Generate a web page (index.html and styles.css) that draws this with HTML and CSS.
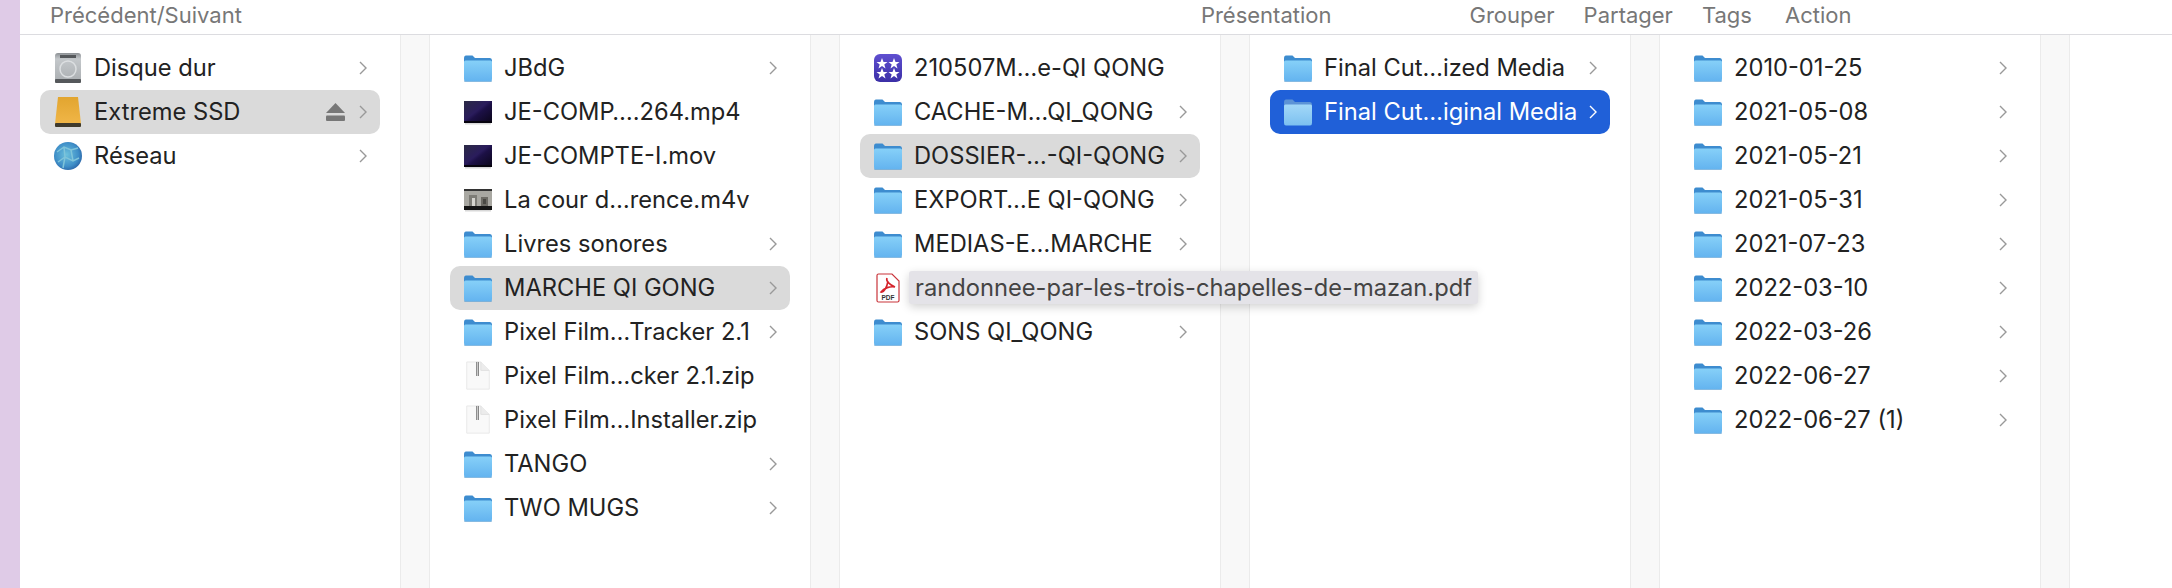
FILE: index.html
```html
<!DOCTYPE html>
<html lang="fr">
<head>
    <meta charset="UTF-8">
    <title>Finder</title>
    <link rel="stylesheet" href="styles.css">
</head>
<body>
<svg class="defs" width="0" height="0">
    <defs>
        <linearGradient id="fold-body" x1="0" y1="0" x2="0" y2="1">
            <stop offset="0" stop-color="#86d0f8"/>
            <stop offset="1" stop-color="#63b3ef"/>
        </linearGradient>
        <linearGradient id="fold-sel" x1="0" y1="0" x2="0" y2="1">
            <stop offset="0" stop-color="#a3d8f8"/>
            <stop offset="1" stop-color="#7cc0f0"/>
        </linearGradient>
        <linearGradient id="movie" x1="0" y1="0" x2="1" y2="1">
            <stop offset="0" stop-color="#2b2a45"/>
            <stop offset=".45" stop-color="#2a1c5c"/>
            <stop offset=".55" stop-color="#1c1046"/>
            <stop offset="1" stop-color="#0a0518"/>
        </linearGradient>
        <linearGradient id="ssd" x1="0" y1="0" x2="0" y2="1">
            <stop offset="0" stop-color="#e2a52f"/>
            <stop offset="1" stop-color="#f0b648"/>
        </linearGradient>
        <linearGradient id="disk" x1="0" y1="0" x2="0" y2="1">
            <stop offset="0" stop-color="#8c9094"/>
            <stop offset=".2" stop-color="#c4c8cb"/>
            <stop offset="1" stop-color="#a9adb0"/>
        </linearGradient>
        <radialGradient id="globe" cx=".45" cy=".45" r=".6">
            <stop offset="0" stop-color="#6cc0dc"/>
            <stop offset=".7" stop-color="#3f8fc8"/>
            <stop offset="1" stop-color="#2a63a6"/>
        </radialGradient>
        <linearGradient id="app" x1="0" y1="0" x2="0" y2="1">
            <stop offset="0" stop-color="#5f4fd0"/>
            <stop offset="1" stop-color="#3b2fa6"/>
        </linearGradient>
        <symbol id="i-folder" viewBox="0 0 28 28">
            <path d="M0 4.500Q0 1.500 2 1.500H8.500L11 4H26Q28 4 28 6.500V12H0Z" fill="#3d8ccf"/>
            <path d="M0 8Q0 6.500 1.500 6.500H26.500Q28 6.500 28 8V25Q28 27.500 26 27.500H2Q0 27.500 0 25Z" fill="url(#fold-body)"/>
            <path d="M0 25.500Q0 27.500 2 27.500H26Q28 27.500 28 25.500V26.500Q28 28 26 28H2Q0 28 0 26.500Z" fill="#5a9ccd"/>
        </symbol>
        <symbol id="i-folder-sel" viewBox="0 0 28 28">
            <path d="M0 4.500Q0 1.500 2 1.500H8.500L11 4H26Q28 4 28 6.500V12H0Z" fill="#5c93d6"/>
            <path d="M0 8Q0 6.500 1.500 6.500H26.500Q28 6.500 28 8V25Q28 27.500 26 27.500H2Q0 27.500 0 25Z" fill="url(#fold-sel)"/>
        </symbol>
        <symbol id="i-chev" viewBox="0 0 8 14">
            <path d="M1 1L7 7L1 13" fill="none" stroke="#999" stroke-width="1.400"/>
        </symbol>
        <symbol id="i-chev-w" viewBox="0 0 8 14">
            <path d="M1 1L7 7L1 13" fill="none" stroke="#fff" stroke-width="1.400"/>
        </symbol>
        <symbol id="i-movie" viewBox="0 0 28 28">
            <rect x="0" y="3" width="28" height="22" fill="url(#movie)"/>
            <rect x="0" y="23" width="28" height="2" fill="#07040f"/>
            <rect x="1" y="25" width="26" height="1.500" fill="#d8d8d8"/>
        </symbol>
        <symbol id="i-photo" viewBox="0 0 28 28">
            <rect x="0" y="3" width="28" height="2" fill="#333"/>
            <rect x="0" y="5" width="28" height="15" fill="#a9a8a2"/>
            <rect x="5" y="9" width="8" height="11" fill="#7d7c76"/>
            <rect x="8" y="12" width="3" height="8" fill="#d5d4cf"/>
            <rect x="17" y="11" width="7" height="9" fill="#6e6c66"/>
            <rect x="19" y="13" width="3" height="5" fill="#4a4944"/>
            <rect x="0" y="20" width="28" height="4" fill="#151515"/>
            <rect x="1" y="24" width="26" height="1.500" fill="#d8d8d8"/>
        </symbol>
        <symbol id="i-zip" viewBox="0 0 28 32">
            <path d="M2 1H17L26 10V30H2Z" fill="#f9f9f9" stroke="#e8e8e8"/>
            <path d="M17 1V10H26" fill="#ececec" stroke="#e0e0e0"/>
            <rect x="12" y="1" width="3" height="15" fill="#808080"/>
            <rect x="13" y="1" width="1" height="15" fill="#d0d0d0"/>
        </symbol>
        <symbol id="i-app" viewBox="0 0 28 28">
            <rect x="0" y="0" width="28" height="28" rx="6" fill="url(#app)"/>
            <polygon points="8,5 9.500,9 13.500,9 10.300,11.500 11.500,15.500 8,13 4.500,15.500 5.700,11.500 2.500,9 6.500,9" fill="#fff" transform="translate(0,-1)"/>
            <polygon points="20,5 21.500,9 25.500,9 22.300,11.500 23.500,15.500 20,13 16.500,15.500 17.700,11.500 14.500,9 18.500,9" fill="#fff" transform="translate(0,-1)"/>
            <polygon points="8,5 9.500,9 13.500,9 10.300,11.500 11.500,15.500 8,13 4.500,15.500 5.700,11.500 2.500,9 6.500,9" fill="#fff" transform="translate(0,9)"/>
            <polygon points="20,5 21.500,9 25.500,9 22.300,11.500 23.500,15.500 20,13 16.500,15.500 17.700,11.500 14.500,9 18.500,9" fill="#fff" transform="translate(0,9)"/>
        </symbol>
        <symbol id="i-pdf" viewBox="0 0 24 30">
            <path d="M1 2.500Q1 1 2.500 1H16L23 8V27.500Q23 29 21.500 29H2.500Q1 29 1 27.500Z" fill="#fff" stroke="#c9343a" stroke-width="1.200"/>
            <path d="M11 5C9.500 8 14 12 19 14C14 13 8 15 5 19C8 20 11 14 12 8" fill="none" stroke="#d5232b" stroke-width="1.600"/>
            <text x="12" y="26.500" class="pdf-label">PDF</text>
        </symbol>
    </defs>
</svg>

<div class="window">
    <div class="toolbar">
        <span class="tool tool-nav">Précédent/Suivant</span>
        <span class="tool tool-view">Présentation</span>
        <span class="tool tool-group">Grouper</span>
        <span class="tool tool-share">Partager</span>
        <span class="tool tool-tags">Tags</span>
        <span class="tool tool-action">Action</span>
    </div>

    <div class="columns">
        <div class="col">
            <div class="row">
                <svg class="icon" viewBox="0 0 28 30">
                    <rect x="1" y="0" width="26" height="30" rx="3" fill="url(#disk)"/>
                    <rect x="6" y="2" width="16" height="3" fill="#55585b"/>
                    <circle cx="14" cy="16" r="8" fill="none" stroke="#dcdfe1" stroke-width="1.500"/>
                    <rect x="1" y="26" width="26" height="4" rx="1" fill="#55585b"/>
                </svg>
                <span class="name">Disque dur</span>
                <svg class="chev"><use href="#i-chev"/></svg>
            </div>
            <div class="row active">
                <svg class="icon" viewBox="0 0 28 30">
                    <path d="M4 0H24L27 27H1Z" fill="url(#ssd)"/>
                    <rect x="1" y="26" width="26" height="4" rx="1" fill="#3f3a2c"/>
                </svg>
                <span class="name">Extreme SSD</span>
                <svg class="eject" viewBox="0 0 19 18">
                    <path d="M9.500 0L19 10H0Z" fill="#777"/>
                    <rect x="0" y="12.500" width="19" height="5.500" rx="1" fill="#777"/>
                </svg>
                <svg class="chev chev-eject"><use href="#i-chev"/></svg>
            </div>
            <div class="row">
                <svg class="icon" viewBox="0 0 28 28">
                    <circle cx="14" cy="14" r="14" fill="url(#globe)"/>
                    <path d="M3 10L10 5L17 8L24 6M4 20L11 15L19 19L25 16M10 5L11 15L9 26M17 8L19 19" fill="none" stroke="#7fc4da" stroke-width="1.500"/>
                </svg>
                <span class="name">Réseau</span>
                <svg class="chev"><use href="#i-chev"/></svg>
            </div>
        </div>

        <div class="col">
            <div class="row"><svg class="icon"><use href="#i-folder"/></svg><span class="name">JBdG</span><svg class="chev"><use href="#i-chev"/></svg></div>
            <div class="row"><svg class="icon"><use href="#i-movie"/></svg><span class="name">JE-COMP….264.mp4</span></div>
            <div class="row"><svg class="icon"><use href="#i-movie"/></svg><span class="name">JE-COMPTE-I.mov</span></div>
            <div class="row"><svg class="icon"><use href="#i-photo"/></svg><span class="name">La cour d…rence.m4v</span></div>
            <div class="row"><svg class="icon"><use href="#i-folder"/></svg><span class="name">Livres sonores</span><svg class="chev"><use href="#i-chev"/></svg></div>
            <div class="row active"><svg class="icon"><use href="#i-folder"/></svg><span class="name">MARCHE QI GONG</span><svg class="chev"><use href="#i-chev"/></svg></div>
            <div class="row"><svg class="icon"><use href="#i-folder"/></svg><span class="name">Pixel Film…Tracker 2.1</span><svg class="chev"><use href="#i-chev"/></svg></div>
            <div class="row"><svg class="icon"><use href="#i-zip"/></svg><span class="name">Pixel Film…cker 2.1.zip</span></div>
            <div class="row"><svg class="icon"><use href="#i-zip"/></svg><span class="name">Pixel Film…Installer.zip</span></div>
            <div class="row"><svg class="icon"><use href="#i-folder"/></svg><span class="name">TANGO</span><svg class="chev"><use href="#i-chev"/></svg></div>
            <div class="row"><svg class="icon"><use href="#i-folder"/></svg><span class="name">TWO MUGS</span><svg class="chev"><use href="#i-chev"/></svg></div>
        </div>

        <div class="col">
            <div class="row"><svg class="icon"><use href="#i-app"/></svg><span class="name">210507M…e-QI QONG</span></div>
            <div class="row"><svg class="icon"><use href="#i-folder"/></svg><span class="name">CACHE-M…QI_QONG</span><svg class="chev"><use href="#i-chev"/></svg></div>
            <div class="row active"><svg class="icon"><use href="#i-folder"/></svg><span class="name">DOSSIER-…-QI-QONG</span><svg class="chev"><use href="#i-chev"/></svg></div>
            <div class="row"><svg class="icon"><use href="#i-folder"/></svg><span class="name">EXPORT…E QI-QONG</span><svg class="chev"><use href="#i-chev"/></svg></div>
            <div class="row"><svg class="icon"><use href="#i-folder"/></svg><span class="name">MEDIAS-E…MARCHE</span><svg class="chev"><use href="#i-chev"/></svg></div>
            <div class="row">
                <svg class="icon"><use href="#i-pdf"/></svg>
                <span class="name-full">randonnee-par-les-trois-chapelles-de-mazan.pdf</span>
            </div>
            <div class="row"><svg class="icon"><use href="#i-folder"/></svg><span class="name">SONS QI_QONG</span><svg class="chev"><use href="#i-chev"/></svg></div>
        </div>

        <div class="col">
            <div class="row"><svg class="icon"><use href="#i-folder"/></svg><span class="name">Final Cut…ized Media</span><svg class="chev"><use href="#i-chev"/></svg></div>
            <div class="row selected"><svg class="icon"><use href="#i-folder-sel"/></svg><span class="name">Final Cut…iginal Media</span><svg class="chev"><use href="#i-chev-w"/></svg></div>
        </div>

        <div class="col">
            <div class="row"><svg class="icon"><use href="#i-folder"/></svg><span class="name">2010-01-25</span><svg class="chev"><use href="#i-chev"/></svg></div>
            <div class="row"><svg class="icon"><use href="#i-folder"/></svg><span class="name">2021-05-08</span><svg class="chev"><use href="#i-chev"/></svg></div>
            <div class="row"><svg class="icon"><use href="#i-folder"/></svg><span class="name">2021-05-21</span><svg class="chev"><use href="#i-chev"/></svg></div>
            <div class="row"><svg class="icon"><use href="#i-folder"/></svg><span class="name">2021-05-31</span><svg class="chev"><use href="#i-chev"/></svg></div>
            <div class="row"><svg class="icon"><use href="#i-folder"/></svg><span class="name">2021-07-23</span><svg class="chev"><use href="#i-chev"/></svg></div>
            <div class="row"><svg class="icon"><use href="#i-folder"/></svg><span class="name">2022-03-10</span><svg class="chev"><use href="#i-chev"/></svg></div>
            <div class="row"><svg class="icon"><use href="#i-folder"/></svg><span class="name">2022-03-26</span><svg class="chev"><use href="#i-chev"/></svg></div>
            <div class="row"><svg class="icon"><use href="#i-folder"/></svg><span class="name">2022-06-27</span><svg class="chev"><use href="#i-chev"/></svg></div>
            <div class="row"><svg class="icon"><use href="#i-folder"/></svg><span class="name">2022-06-27 (1)</span><svg class="chev"><use href="#i-chev"/></svg></div>
        </div>
    </div>
</div>
</body>
</html>
```

FILE: styles.css
```css
html, body {
    height: 100%;
}

body {
    margin: 0;
    overflow: hidden;
    background-color: #dfcbe7;
    font-family: Inter, "Noto Sans", sans-serif;
}

.defs {
    display: block;
    width: 0;
    height: 0;
}

.window {
    height: 588px;
    margin-left: 20px;
    background-color: #fff;
}

/* toolbar */
.toolbar {
    display: flex;
    align-items: center;
    box-sizing: content-box;
    height: 30px;
    padding: 0 0 4px 30px;
    border-bottom: 1px solid #dcdce0;
    font-size: 22px;
    color: #777;
}

.tool-view {
    margin-left: 959px;
}

.tool-group {
    margin-left: 138px;
}

.tool-share {
    margin-left: 29px;
}

.tool-tags {
    margin-left: 29px;
}

.tool-action {
    margin-left: 33px;
}

/* columns */
.columns {
    display: flex;
    height: 553px;
}

.col {
    flex: none;
    width: 380px;
    padding-top: 11px;
    margin-right: 30px;
    position: relative;
}

.col::after {
    content: "";
    position: absolute;
    top: 0;
    bottom: 0;
    left: 380px;
    width: 28px;
    background-color: #f8f8f8;
    border-left: 1px solid #ebebeb;
    border-right: 1px solid #ebebeb;
}

.row {
    display: flex;
    align-items: center;
    height: 44px;
    margin: 0 20px;
    padding: 0 13px 0 14px;
    border-radius: 10px;
    position: relative;
}

.row.active {
    background-color: #dadada;
}

.row.selected {
    background-color: #2060d8;
    color: #fff;
}

.icon {
    flex: none;
    width: 28px;
    height: 30px;
    margin-right: 12px;
}

.name {
    flex: 1;
    font-size: 23.7px;
    line-height: 43px;
    padding-bottom: 1px;
    white-space: nowrap;
    color: #222;
}

.selected .name {
    color: #fff;
}

.chev {
    flex: none;
    width: 8px;
    height: 14px;
}

.eject {
    flex: none;
    width: 19px;
    height: 18px;
    margin-right: 14px;
}

/* long name tooltip over the next column */
.name-full {
    position: absolute;
    z-index: 2;
    top: 5px;
    left: 49px;
    height: 33px;
    padding: 0 6px;
    line-height: 33px;
    font-size: 23.7px;
    white-space: nowrap;
    color: #444;
    background-color: #e4e3e8;
    border-radius: 3px;
    box-shadow: 0 3px 10px rgba(0, 0, 0, 0.18);
}

.pdf-label {
    font-family: "Liberation Sans", sans-serif;
    font-size: 6.500px;
    font-weight: bold;
    fill: #333;
    text-anchor: middle;
}
```
